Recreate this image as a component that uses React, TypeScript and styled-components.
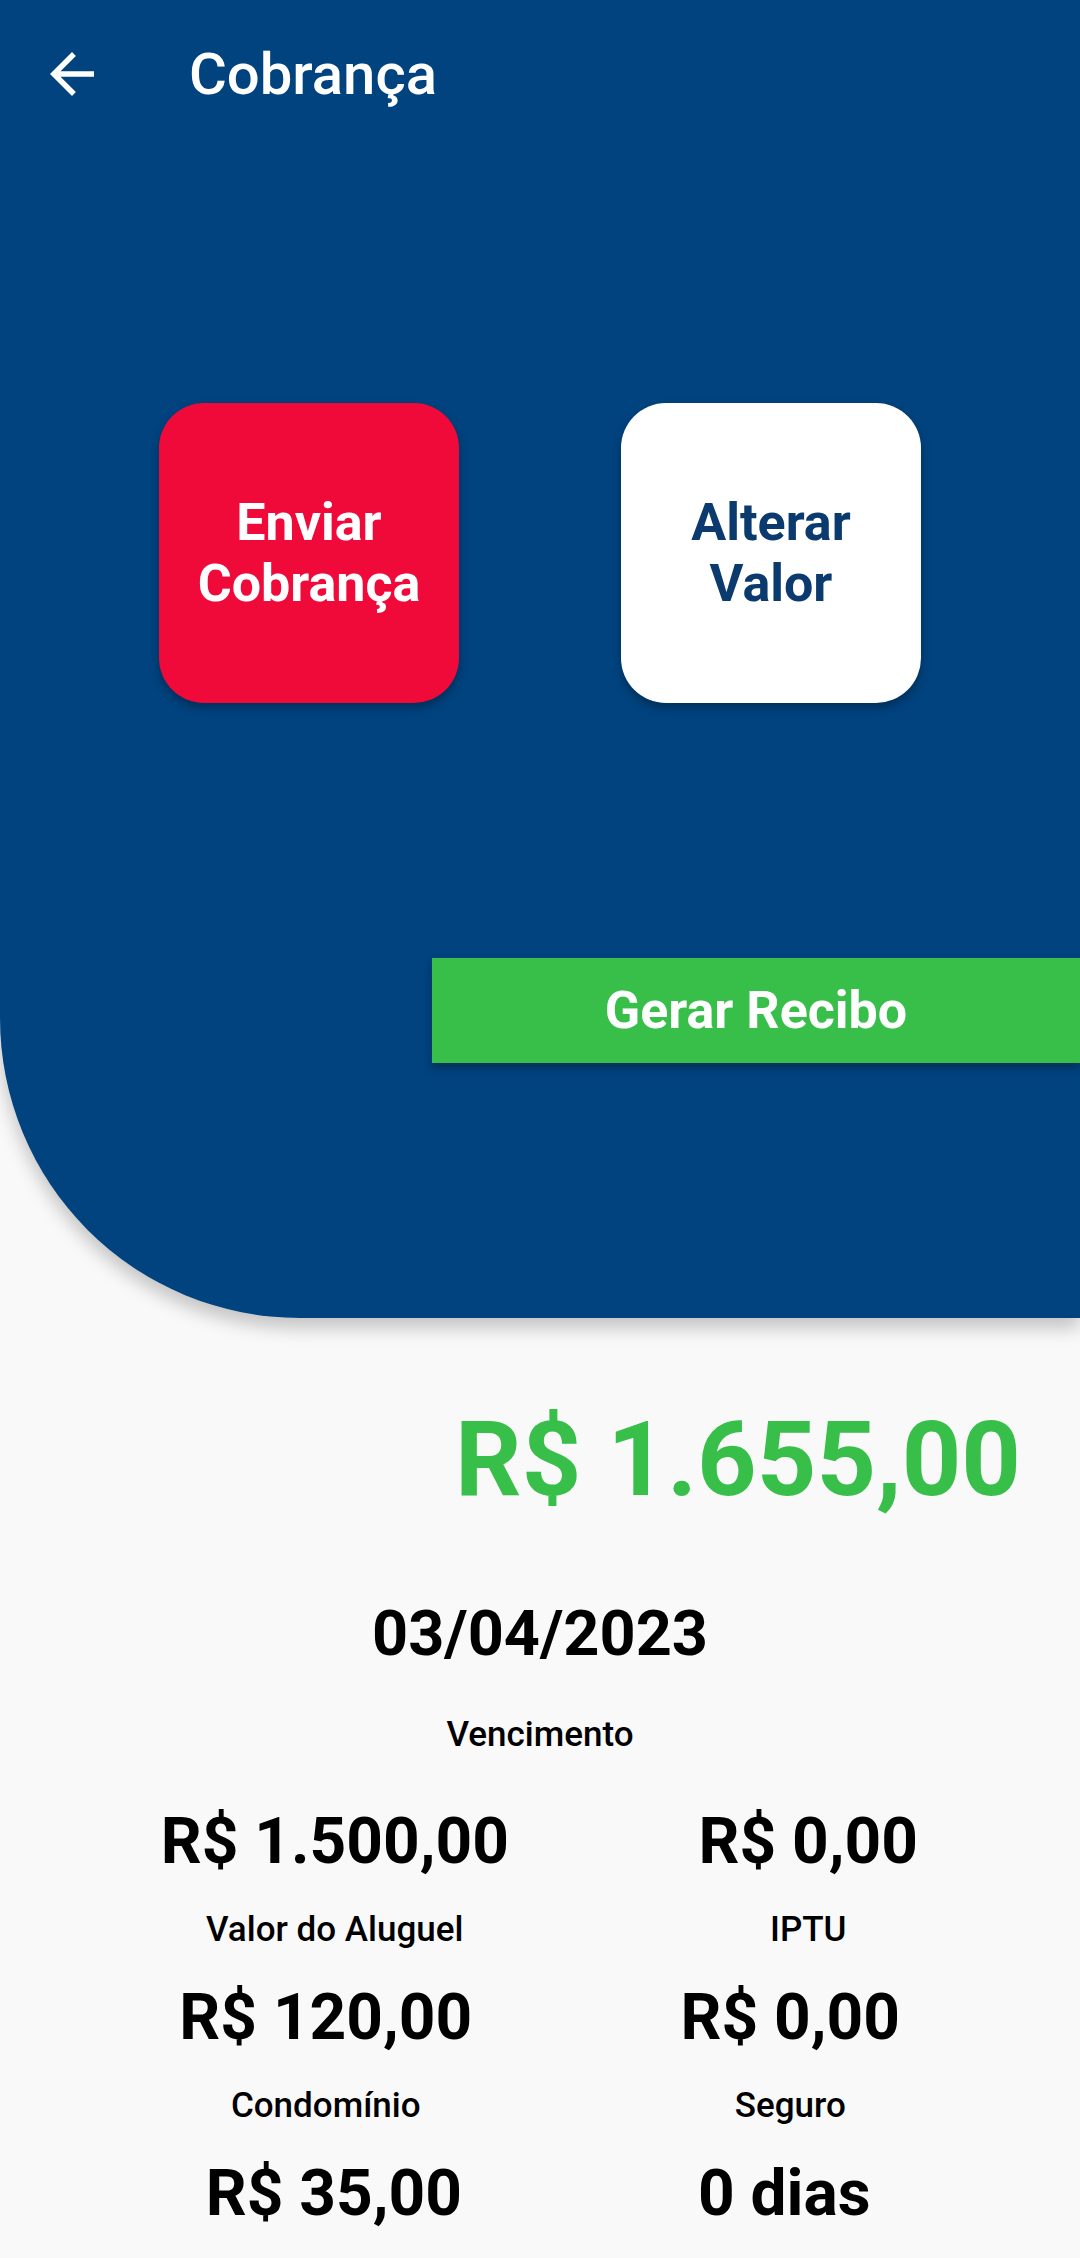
import React from "react";
import styled, { createGlobalStyle } from "styled-components";

const GlobalStyle = createGlobalStyle`
  html, body {
    margin: 0;
    padding: 0;
    background: #f9f9f9;
    font-family: Roboto, "Noto Sans", "Liberation Sans", sans-serif;
  }
  * { box-sizing: border-box; }
`;

const Page = styled.div`
  width: 1080px;
  min-height: 2258px;
  background: #f9f9f9;
  overflow: hidden;
`;

const Hero = styled.header`
  background: #00437f;
  border-bottom-left-radius: 300px;
  padding-bottom: 255px;
  box-shadow: 0 10px 18px rgba(0, 0, 0, 0.22);
  position: relative;
  z-index: 1;
`;

const Toolbar = styled.div`
  height: 148px;
  display: flex;
  align-items: center;
  padding-left: 39px;
`;

const BackButton = styled.button`
  width: 66px;
  height: 66px;
  padding: 0;
  border: none;
  background: transparent;
  display: flex;
  align-items: center;
  justify-content: center;
  color: #ffffff;
  cursor: pointer;
`;

const Title = styled.h1`
  margin: 0 0 0 84px;
  font-size: 58px;
  font-weight: 500;
  color: #ffffff;
  line-height: 1;
`;

const ActionRow = styled.div`
  margin-top: 255px;
  display: flex;
  justify-content: center;
  gap: 162px;
`;

const ActionTile = styled.button<{ $variant: "danger" | "light" }>`
  width: 300px;
  height: 300px;
  border: none;
  border-radius: 45px;
  background: ${(p) => (p.$variant === "danger" ? "#ef0a3a" : "#ffffff")};
  color: ${(p) => (p.$variant === "danger" ? "#ffffff" : "#0b3a6e")};
  font-family: Roboto, "Liberation Sans", sans-serif;
  font-size: 52px;
  font-weight: 700;
  line-height: 61px;
  text-align: center;
  box-shadow: 0 5px 10px rgba(0, 0, 0, 0.3);
  display: flex;
  align-items: center;
  justify-content: center;
  cursor: pointer;
`;

const ReceiptBar = styled.button`
  display: flex;
  align-items: center;
  justify-content: center;
  margin: 255px 0 0 432px;
  width: calc(100% - 432px);
  height: 105px;
  border: none;
  background: #37bf4a;
  color: #ffffff;
  font-family: Roboto, "Liberation Sans", sans-serif;
  font-size: 52px;
  font-weight: 700;
  box-shadow: 0 5px 8px rgba(0, 0, 0, 0.3);
  cursor: pointer;
`;

const Summary = styled.main`
  padding-top: 81px;
  display: flex;
  flex-direction: column;
`;

const Total = styled.div`
  text-align: right;
  padding-right: 59px;
  font-size: 104px;
  font-weight: 700;
  line-height: 122px;
  color: #37bf4a;
`;

const DueDate = styled.div`
  margin-top: 76px;
  text-align: center;
  font-size: 63px;
  font-weight: 700;
  line-height: 74px;
  color: #000000;
`;

const Label = styled.div<{ $dx?: number }>`
  text-align: center;
  font-size: 35px;
  font-weight: 500;
  line-height: 40px;
  color: #000000;
  transform: translateX(${(p) => p.$dx ?? 0}px);
`;

const DueLabel = styled(Label)`
  margin-top: 44px;
`;

const Details = styled.div`
  margin-top: 49px;
  display: grid;
  grid-template-columns: 1fr 1fr;
  row-gap: 30px;
  padding: 0 41px 0 100px;
`;

const Value = styled.div<{ $dx?: number }>`
  text-align: center;
  font-size: 64px;
  font-weight: 700;
  line-height: 76px;
  color: #000000;
  transform: translateX(${(p) => p.$dx ?? 0}px);
`;

const rows = [
  { left: ["R$ 1.500,00", "Valor do Aluguel"], right: ["R$ 0,00", "IPTU"], dl: 0, dr: 4 },
  { left: ["R$ 120,00", "Condomínio"], right: ["R$ 0,00", "Seguro"], dl: -9, dr: -14 },
  { left: ["R$ 35,00", null], right: ["0 dias", null], dl: -1, dr: -20 },
];

export default function App() {
  return (
    <Page>
      <GlobalStyle />
      <Hero>
        <Toolbar>
          <BackButton aria-label="Voltar">
            <svg width="66" height="66" viewBox="0 0 24 24" fill="currentColor">
              <path d="M20 11H7.83l5.59-5.59L12 4l-8 8 8 8 1.41-1.41L7.83 13H20v-2z" />
            </svg>
          </BackButton>
          <Title>Cobrança</Title>
        </Toolbar>
        <ActionRow>
          <ActionTile $variant="danger">
            Enviar
            <br />
            Cobrança
          </ActionTile>
          <ActionTile $variant="light">
            Alterar
            <br />
            Valor
          </ActionTile>
        </ActionRow>
        <ReceiptBar>Gerar Recibo</ReceiptBar>
      </Hero>
      <Summary>
        <Total>R$ 1.655,00</Total>
        <DueDate>03/04/2023</DueDate>
        <DueLabel>Vencimento</DueLabel>
        <Details>
          {rows.map((r, i) => (
            <React.Fragment key={i}>
              <Value $dx={r.dl}>{r.left[0]}</Value>
              <Value $dx={r.dr}>{r.right[0]}</Value>
              {r.left[1] && <Label $dx={r.dl}>{r.left[1]}</Label>}
              {r.right[1] && <Label $dx={r.dr}>{r.right[1]}</Label>}
            </React.Fragment>
          ))}
        </Details>
      </Summary>
    </Page>
  );
}
